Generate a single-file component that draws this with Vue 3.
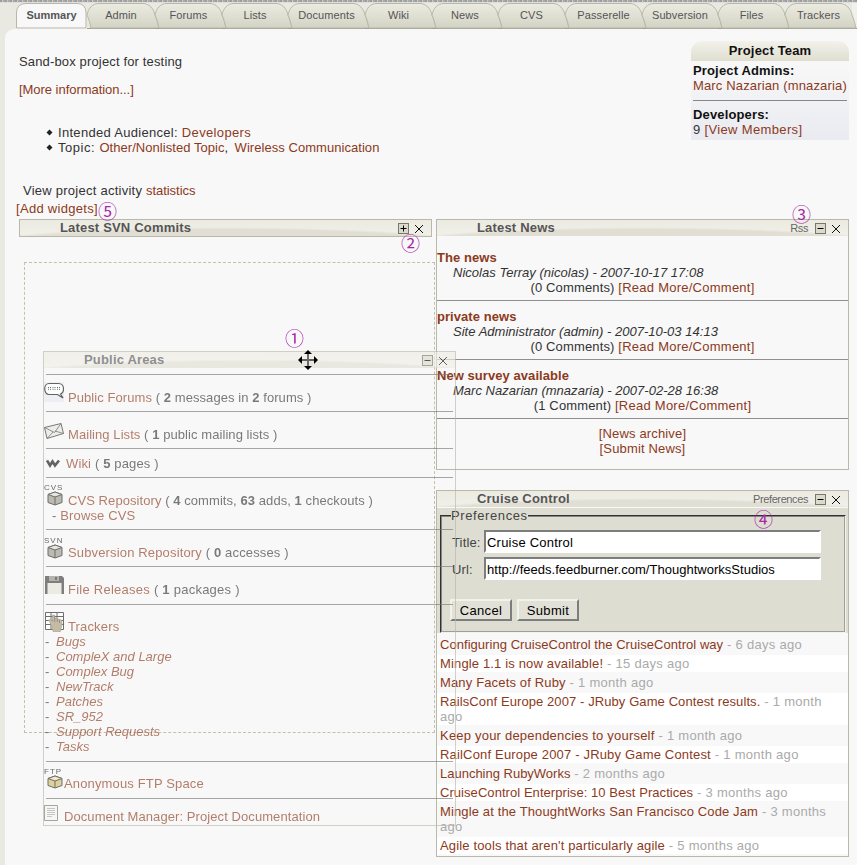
<script setup>
const edges = [16, 87, 155, 222, 288, 365, 432, 498, 565, 642, 718, 785, 852]
const names = ['Summary', 'Admin', 'Forums', 'Lists', 'Documents', 'Wiki', 'News', 'CVS', 'Passerelle', 'Subversion', 'Files', 'Trackers']
const tabs = names.map((name, i) => {
  const w = edges[i + 1] - edges[i]
  const d = i === 0
    ? `M.5 25V10Q.5 .5 10 .5H${w - 10}Q${w - 1} .5 ${w - 1} 10V25Z`
    : `M0 12C1 6 5 .5 12 .5H${w - 12}C${w - 6} .5 ${w - 1} 6 ${w} 12C${w + 2} 16 ${w + 3} 21 ${w + 4} 25H4C3 21 2 16 0 12Z`
  return { name, w, d, active: i === 0 }
})
const feedRows = [
  ['Configuring CruiseControl the CruiseControl way', '6 days ago', -5],
  ['Mingle 1.1 is now available!', '15 days ago', 0],
  ['Many Facets of Ruby', '1 month ago', 0],
  ['RailsConf Europe 2007 - JRuby Game Contest results.', '1 month ago', -3],
  ['Keep your dependencies to yourself', '1 month ago', 2],
  ['RailConf Europe 2007 - JRuby Game Contest', '1 month ago', 1],
  ['Launching RubyWorks', '2 months ago', -3],
  ['CruiseControl Enterprise: 10 Best Practices', '3 months ago', -4],
  ['Mingle at the ThoughtWorks San Francisco Code Jam', '3 months ago', -1],
  ["Agile tools that aren't particularly agile", '5 months ago', 0]
]
const feed = feedRows.map(([title, ago, delta]) => ({
  title,
  ago,
  spacing: (0.15 + delta / title.length).toFixed(3) + 'px'
}))
const news = [
  ['The news', 'Nicolas Terray (nicolas) - 2007-10-17 17:08', '(0 Comments)'],
  ['private news', 'Site Administrator (admin) - 2007-10-03 14:13', '(0 Comments)'],
  ['New survey available', 'Marc Nazarian (mnazaria) - 2007-02-28 16:38', '(1 Comment)']
]
const trackers = ['Bugs', 'CompleX and Large', 'Complex Bug', 'NewTrack', 'Patches', 'SR_952', 'Support Requests', 'Tasks']
const notes = [
  { t: '①', c: 'n1' }, { t: '②', c: 'n2' }, { t: '③', c: 'n3' }, { t: '④', c: 'n4' }, { t: '⑤', c: 'n5' }
]
</script>

<template>
  <div class="page">
    <div class="strip"></div>
    <div class="tabs">
      <div v-for="t in tabs" :key="t.name" class="tab" :class="{ active: t.active }" :style="{ width: t.w + 'px' }">
        <svg class="tab-bg" :width="t.w" height="25">
          <defs>
            <linearGradient id="tabfill" x1="0" y1="0" x2="0" y2="1">
              <stop offset="0" stop-color="#ebebe0" />
              <stop offset="1" stop-color="#d3d3c5" />
            </linearGradient>
          </defs>
          <path :d="t.d" :fill="t.active ? '#f8f8f8' : 'url(#tabfill)'" stroke="#b8b8a8" />
        </svg>
        <span class="tab-label">{{ t.name }}</span>
      </div>
      <div class="tab-rest"></div>
    </div>

    <main class="content">
      <div class="intro">
        <div class="intro-text">
          <p class="desc">Sand-box project for testing</p>
          <p class="more"><a>[More information...]</a></p>
          <ul class="topics">
            <li><i class="dia"></i><span class="lead-a">Intended Audiencel: </span><a class="dev">Developers</a></li>
            <li><i class="dia"></i><span class="lead-b">Topic: </span><a class="tight">Other/Nonlisted Topic</a><span class="comma">, </span><a class="tight">Wireless Communication</a></li>
          </ul>
          <p class="activity">View project activity <a class="stat">statistics</a></p>
          <p class="add"><a>[Add widgets]</a></p>
        </div>
        <aside class="team">
          <h3>Project Team</h3>
          <div class="team-body">
            <b>Project Admins:</b>
            <a>Marc Nazarian (mnazaria)</a>
            <hr />
            <b>Developers:</b>
            <span class="members">9 <a>[View Members]</a></span>
          </div>
        </aside>
      </div>

      <div class="widgets">
        <div class="col">
          <section class="widget">
            <header class="w-head">
              <span class="w-title">Latest SVN Commits</span>
              <span class="w-tools">
                <svg class="box" width="11" height="11" viewBox="0 0 11 11"><rect x=".5" y=".5" width="10" height="10" fill="#dcdacd" stroke="#77776c" /><path d="M2.5 5.5h6M5.5 2.5v6" stroke="#000" /></svg>
                <svg width="10" height="10" viewBox="0 0 10 10"><path d="M1 1l8 8M9 1l-8 8" stroke="#111" /></svg>
              </span>
            </header>
          </section>
          <div class="placeholder"></div>
        </div>

        <div class="col">
          <section class="widget news">
            <header class="w-head">
              <span class="w-title">Latest News</span>
              <span class="w-tools">
                <span class="w-link">Rss</span>
                <svg class="box" width="11" height="11" viewBox="0 0 11 11"><rect x=".5" y=".5" width="10" height="10" fill="#dcdacd" stroke="#77776c" /><path d="M2.5 5.5h6" stroke="#000" /></svg>
                <svg width="10" height="10" viewBox="0 0 10 10"><path d="M1 1l8 8M9 1l-8 8" stroke="#111" /></svg>
              </span>
            </header>
            <article v-for="n in news" :key="n[0]" class="item">
              <a class="item-title">{{ n[0] }}</a>
              <em class="item-by">{{ n[1] }}</em>
              <span class="item-more">{{ n[2] }} <a>[Read More/Comment]</a></span>
            </article>
            <div class="news-foot">
              <a>[News archive]</a>
              <a>[Submit News]</a>
            </div>
          </section>

          <section class="widget cruise">
            <header class="w-head">
              <span class="w-title">Cruise Control</span>
              <span class="w-tools">
                <span class="w-link">Preferences</span>
                <svg class="box" width="11" height="11" viewBox="0 0 11 11"><rect x=".5" y=".5" width="10" height="10" fill="#dcdacd" stroke="#77776c" /><path d="M2.5 5.5h6" stroke="#000" /></svg>
                <svg width="10" height="10" viewBox="0 0 10 10"><path d="M1 1l8 8M9 1l-8 8" stroke="#111" /></svg>
              </span>
            </header>
            <div class="prefs">
              <fieldset>
                <legend>Preferences</legend>
                <label class="field"><span>Title:</span><input class="in-title" value="Cruise Control" /></label>
                <label class="field"><span>Url:</span><input class="in-url" value="http://feeds.feedburner.com/ThoughtworksStudios" /></label>
                <div class="btns"><button type="button">Cancel</button><button type="button">Submit</button></div>
              </fieldset>
            </div>
            <ul class="feed">
              <li v-for="f in feed" :key="f.title"><a :style="{ letterSpacing: f.spacing }">{{ f.title }}</a><span class="ago"> - {{ f.ago }}</span></li>
            </ul>
          </section>
        </div>
      </div>
    </main>

    <section class="widget floating">
      <header class="w-head">
        <span class="w-title">Public Areas</span>
        <span class="w-tools">
          <svg class="box" width="11" height="11" viewBox="0 0 11 11"><rect x=".5" y=".5" width="10" height="10" fill="#dcdacd" stroke="#77776c" /><path d="M2.5 5.5h6" stroke="#000" /></svg>
          <svg width="10" height="10" viewBox="0 0 10 10"><path d="M1 1l8 8M9 1l-8 8" stroke="#111" /></svg>
        </span>
      </header>
      <div class="rule-top"></div>

      <div class="pa">
        <span class="ic w24">
          <svg class="i-forum" width="21" height="21" viewBox="0 0 21 21"><rect width="20" height="20" fill="#e6e9f2" /><path d="M5 1.500h9.500c3.200 0 5 2.400 5 5.200s-1.200 4.600-3 5.300l2.500 4-5.500-3.500H5C2.500 12.500 .7 9.800 .7 6.800S2.500 1.500 5 1.500z" fill="#fff" stroke="#111" stroke-width="1.200" /><path d="M4.500 5v3.500M6.500 5v3.500M9 5v3.500M11 5v3.500M13.500 5v3.500M15.500 5v3.500" stroke="#222" stroke-dasharray="1 .8" /></svg>
        </span>
        <span class="pa-text"><a>Public Forums</a> ( <b>2</b> messages in <b>2</b> forums )</span>
      </div>
      <div class="pa">
        <span class="ic w24">
          <svg class="i-mail" width="20" height="16" viewBox="0 0 20 16"><path d="M.5 4.500L17 .5l2.500 10L3 15.500z" fill="#e6e6de" stroke="#333" /><path d="M.5 4.500l10 5L17 .5M3 15.500l6-6.500M19.500 10.500L11 8" fill="none" stroke="#333" stroke-width=".8" /></svg>
        </span>
        <span class="pa-text"><a>Mailing Lists</a> ( <b>1</b> public mailing lists )</span>
      </div>
      <div class="pa short">
        <span class="ic w22">
          <svg class="i-wiki" width="14" height="9" viewBox="0 0 14 9"><path d="M1 1.500l3 5 2.500-4 2.500 4 4-5" fill="none" stroke="#111" stroke-width="2.600" /></svg>
        </span>
        <span><a>Wiki</a> ( <b>5</b> pages )</span>
      </div>
      <div class="pa">
        <span class="ic w24">
          <span class="i-stack cvs">
            <span class="tiny">CVS</span>
            <svg class="cube" width="16" height="15" viewBox="0 0 16 15"><path d="M1 3.500L8 1l7 2.500v8L8 14l-7-2.500z" fill="#98988a" stroke="#222" /><path d="M1 3.500L8 6l7-2.500L8 1z" fill="#dedcd0" stroke="#222" /><path d="M8 6v8" stroke="#222" /></svg>
          </span>
        </span>
        <span class="pa-text"><a>CVS Repository</a> ( <b>4</b> commits, <b>63</b> adds, <b>1</b> checkouts )</span>
      </div>
      <div class="browse">- <a>Browse CVS</a></div>
      <div class="pa">
        <span class="ic w24">
          <span class="i-stack svn">
            <span class="tiny">SVN</span>
            <svg class="cube" width="16" height="15" viewBox="0 0 16 15"><path d="M1 3.500L8 1l7 2.500v8L8 14l-7-2.500z" fill="#98988a" stroke="#222" /><path d="M1 3.500L8 6l7-2.500L8 1z" fill="#dedcd0" stroke="#222" /><path d="M8 6v8" stroke="#222" /></svg>
          </span>
        </span>
        <span><a>Subversion Repository</a> ( <b>0</b> accesses )</span>
      </div>
      <div class="pa tall">
        <span class="ic w24">
          <svg class="i-floppy" width="19" height="19" viewBox="0 0 19 19"><path d="M0 1h17l2 2v16H0z" fill="#3c3c3c" /><rect x="4" y="1" width="10" height="5" fill="#8f8f86" /><rect x="10" y="2" width="2" height="3" fill="#333" /><rect x="2.500" y="8" width="14" height="11" fill="#e4e4d8" /></svg>
        </span>
        <span class="file-text"><a>File Releases</a> ( <b>1</b> packages )</span>
      </div>
      <div class="pa trk">
        <span class="ic w24">
          <svg class="i-track" width="19" height="20" viewBox="0 0 19 20"><path d="M.5 .5h18v17H.5zM.5 4.500h18M.5 8.500h18M.5 12.500h18M6 .5v17M12 .5v17" fill="#fff" stroke="#222" /><path d="M5 10.500L3.500 8l2-.5L7.500 9.500V3h2.200l.5 3.500 2.300.3 2 .5 2 .7 .5 4-1 5-.5 2.500H8l-1-4z" fill="#a89a78" stroke="#7a6f55" stroke-width=".6" /><path d="M9.700 4v6M12.300 7v3M14.500 8v3" stroke="#4d4638" stroke-width=".8" /></svg>
        </span>
        <span><a>Trackers</a></span>
      </div>
      <ul class="subs">
        <li v-for="t in trackers" :key="t"><span>-</span><a><em>{{ t }}</em></a></li>
      </ul>
      <div class="pa ftp">
        <span class="ic w20">
          <span class="i-stack ftpi">
            <span class="tiny">FTP</span>
            <svg class="cube" width="16" height="14" viewBox="0 0 16 14"><path d="M1 3.500L8 1l7 2.500v7L8 13l-7-2.500z" fill="#cdbb66" stroke="#222" /><path d="M1 3.500L8 6l7-2.500L8 1z" fill="#efe4a7" stroke="#222" /><path d="M8 6v7" stroke="#222" /></svg>
          </span>
        </span>
        <span><a>Anonymous FTP Space</a></span>
      </div>
      <div class="pa doc">
        <span class="ic w20">
          <svg class="i-doc" width="14" height="16" viewBox="0 0 14 16"><path d="M.5 .5h13v15H.5z" fill="#f4f4f0" stroke="#777" /><path d="M3 3.500h8M3 5.500h8M3 7.500h8M3 9.500h8M3 11.500h5" stroke="#aaa" /></svg>
        </span>
        <span class="doc-text"><a>Document Manager: Project Documentation</a></span>
      </div>
    </section>

    <svg class="move" width="20" height="20" viewBox="0 0 20 20">
      <path d="M10 0l4 4H6zM10 20l-4-4h8zM0 10l4-4v8zM20 10l-4 4V6z" fill="#000" />
      <path d="M10 3v14M3 10h14" stroke="#000" stroke-width="1.400" />
      <path d="M4 10h12M10 4v12" stroke="#fff" stroke-width=".4" />
    </svg>
    <span v-for="n in notes" :key="n.t" class="note" :class="n.c">{{ n.t }}</span>
  </div>
</template>

<style scoped>
.page {
  position: relative;
  width: 857px;
  height: 865px;
  overflow: hidden;
  background: #e9e9e1;
  font: 13px/15px "Liberation Sans", Arial, sans-serif;
  letter-spacing: .15px;
  color: #333;
}
a { color: #8c3a1c; }
p { margin: 0; }
b { color: inherit; }

.strip {
  height: 3px;
  background: repeating-linear-gradient(90deg, #9d9d9d 0 2px, #c9c9c9 2px 3px, #aaa 3px 5px);
  border-bottom: 1px solid #dedede;
  box-sizing: border-box;
}
.tabs { display: flex; height: 26px; padding-left: 16px; }
.tab {
  position: relative;
  flex: none;
  box-sizing: border-box;
  height: 26px;
  border-bottom: 1px solid #a2a297;
  font-size: 11px;
  line-height: 24px;
  text-align: center;
  color: #555;
  letter-spacing: .1px;
}
.tab.active { z-index: 2; border-bottom: 1px solid #f8f8f8; font-weight: bold; letter-spacing: 0; }
.tab-bg { position: absolute; left: 0; top: 0; overflow: visible; }
.tab-label { position: relative; }
.tab-rest { flex: 1; border-bottom: 1px solid #a2a297; background: #f1f1ec; }

.content {
  height: 836px;
  margin-left: 5px;
  padding-left: 14px;
  background: #f8f8f8;
  border-radius: 9px 0 0 0;
}
.intro { display: flex; justify-content: space-between; }
.intro-text { padding-top: 25px; }
.more { margin-top: 13px; letter-spacing: -.04px; }
.topics { list-style: none; margin: 28px 0 0; padding: 0 0 0 28px; }
.topics li { display: flex; white-space: pre; }
.dia {
  flex: none;
  width: 5px;
  height: 5px;
  margin: 5px 6px 0 0;
  background: #222;
  transform: rotate(45deg) scale(.85);
}
.lead-a { letter-spacing: .3px; }
.lead-b { letter-spacing: .55px; }
.dev { letter-spacing: .35px; }
.tight { letter-spacing: .05px; }
.comma { letter-spacing: 1.400px; }
.activity { margin: 28px 0 0 4px; letter-spacing: .25px; }
.stat { letter-spacing: -.05px; }
.add { margin: 3px 0 0 -3px; letter-spacing: .3px; }

.team { width: 158px; margin: 12px 8px 0 0; height: 99px; }
.team h3 {
  margin: 0;
  height: 20px;
  font-size: 13px;
  line-height: 20px;
  text-align: center;
  color: #111;
  border-radius: 11px 11px 0 0;
  background: linear-gradient(#f3f2eb, #dfdecf);
}
.team-body {
  display: flex;
  flex-direction: column;
  height: 79px;
  box-sizing: border-box;
  padding: 2px 2px 0;
  background: linear-gradient(#f8f8f8, #e9ebf1);
  white-space: nowrap;
}
.team-body b { color: #111; }
.team-body hr { width: 154px; margin: 7px 0 6px; border: 0; border-top: 1px solid #888; }
.members { letter-spacing: .35px; }

.widgets { display: grid; grid-template-columns: 413px 413px; column-gap: 4px; margin-top: 3px; }
.col { min-width: 0; }
.widget { box-sizing: border-box; border: 1px solid #b9b9a9; background: #f8f8f8; }
.w-head {
  display: flex;
  align-items: center;
  height: 16px;
  padding: 0 7px 0 40px;
  background:
    radial-gradient(ellipse 66% 130% at 50% 175%, #e1dfd3 90%, transparent 100%),
    linear-gradient(#ecebe2, #f1f0e9);
}
.w-title { margin-bottom: 2px; font-weight: bold; color: #555; letter-spacing: .18px; }
.w-tools { display: flex; align-items: center; margin-left: auto; gap: 5px; }
.w-link { font-size: 11px; letter-spacing: -.4px; color: #666; margin-right: 2px; }
.box { margin-top: 1px; }
.w-tools svg:last-child { margin-top: 1px; }

.placeholder {
  box-sizing: border-box;
  width: 411px;
  height: 471px;
  margin: 25px 0 0 5px;
  border: 1px dashed #c2c2aa;
}

.news { height: 251px; }
.item { display: flex; flex-direction: column; padding: 8px 0 5px; border-bottom: 1px solid #8f8f8f; }
.item:nth-of-type(1) { padding-top: 14px; }
.item-title { font-weight: bold; letter-spacing: .06px; }
.item-by { padding-left: 16px; letter-spacing: .02px; }
.item-more a { letter-spacing: .25px; }
.item-more, .news-foot { text-align: center; }
.news-foot { display: flex; flex-direction: column; padding-top: 7px; }

.cruise { height: 367px; margin-top: 20px; }
.prefs { margin-top: 1px; height: 125px; padding: 0 2px 0 3px; background: #deddd2; }
fieldset {
  box-sizing: border-box;
  height: 125px;
  min-width: 0;
  margin: 0;
  padding: 0 10px 10px;
  border: 2px groove #c0c0b8;
  border-color: #858585 #f2f2ec #f2f2ec #858585;
  outline: 0;
}
legend { padding: 0; margin-left: -1px; color: #444; letter-spacing: .6px; }
.field { display: flex; align-items: center; height: 23px; margin-top: 4px; color: #444; }
legend + .field { margin-top: 7px; }
.field span { width: 32px; flex: none; padding-top: 2px; }
.field input {
  box-sizing: border-box;
  width: 337px;
  height: 23px;
  padding: 2px 1px 0;
  border: 2px solid;
  border-color: #7d7d7d #fff #fff #7d7d7d;
  background: #fff;
  color: #000;
  font: 13px "Liberation Sans", Arial, sans-serif;
  outline: 0;
}
.in-title { letter-spacing: .22px; }
.in-url { letter-spacing: .02px; }
.btns { display: flex; gap: 5px; margin: 19px 0 0 -2px; }
.btns button {
  box-sizing: border-box;
  width: 62px;
  height: 22px;
  padding: 0;
  border: 2px solid;
  border-color: #f2f2ec #7d7d7d #7d7d7d #f2f2ec;
  background: #e2e1d8;
  color: #000;
  font: 13px "Liberation Sans", Arial, sans-serif;
  letter-spacing: .3px;
}
.feed { display: flex; flex-direction: column; gap: 2px; list-style: none; margin: 0; padding: 3px 0 0; }
.feed li { padding: 1px 3px; }
.feed li:nth-child(even) { background: #fff; }
.ago { color: #aaa; letter-spacing: .28px; }

.floating {
  position: absolute;
  left: 43px;
  top: 351px;
  width: 413px;
  height: 475px;
  background: transparent;
  opacity: .65;
}
.rule-top { height: 6px; margin: 0 2px; border-bottom: 1px solid #777; }
.pa {
  display: flex;
  padding: 15px 0 6px;
  margin: 0 2px;
  border-bottom: 1px solid #777;
  white-space: pre;
}
.pa .ic { margin-left: -2px; }
.pa-text { letter-spacing: .07px; }
.file-text { letter-spacing: .25px; }
.doc-text { letter-spacing: .08px; }
.pa.short { padding-top: 7px; }
.pa.tall { padding-bottom: 7px; }
.pa.trk { padding: 14px 0 0; border: 0; }
.pa.ftp { padding: 14px 0 7px; }
.pa.doc { padding: 10px 0 0; border: 0; }
.pa:has(+ .browse) { border: 0; padding-bottom: 0; }
.browse { margin: 0 2px; padding: 0 0 6px 6px; border-bottom: 1px solid #777; white-space: pre; }
.subs { list-style: none; margin: 0 2px; padding: 0 0 7px; border-bottom: 1px solid #777; letter-spacing: 0; }
.subs li { display: flex; margin-left: -1px; }
.subs li span { width: 11px; }

.ic { flex: none; display: block; height: 15px; }
.ic svg { display: block; }
.w24 { width: 24px; }
.w22 { width: 22px; }
.w20 { width: 20px; }
.i-forum { margin-top: -8px; }
.i-mail { margin-top: -4px; }
.i-wiki { margin: 3px 0 0 2px; }
.i-floppy { margin: -7px 0 0 1px; }
.i-track { margin: -7px 0 0 1px; }
.i-doc { margin-top: -4px; }
.i-stack { display: block; }
.i-stack.cvs { margin-top: -9px; }
.i-stack.svn { margin-top: -8px; }
.i-stack.ftpi { margin-top: -8px; }
.tiny { display: block; height: 7px; font-size: 8px; line-height: 7px; color: #111; letter-spacing: 1px; }
.i-stack .cube { margin-left: 3px; }

.move { position: absolute; left: 298px; top: 350px; }
.note {
  position: absolute;
  font: 19px/19px "Noto Sans CJK JP", "DejaVu Sans", sans-serif;
  letter-spacing: 0;
  color: #a828a8;
}
.n1 { left: 285px; top: 328px; }
.n2 { left: 401px; top: 233px; }
.n3 { left: 792px; top: 204px; }
.n4 { left: 754px; top: 509px; }
.n5 { left: 98px; top: 201px; }
</style>
